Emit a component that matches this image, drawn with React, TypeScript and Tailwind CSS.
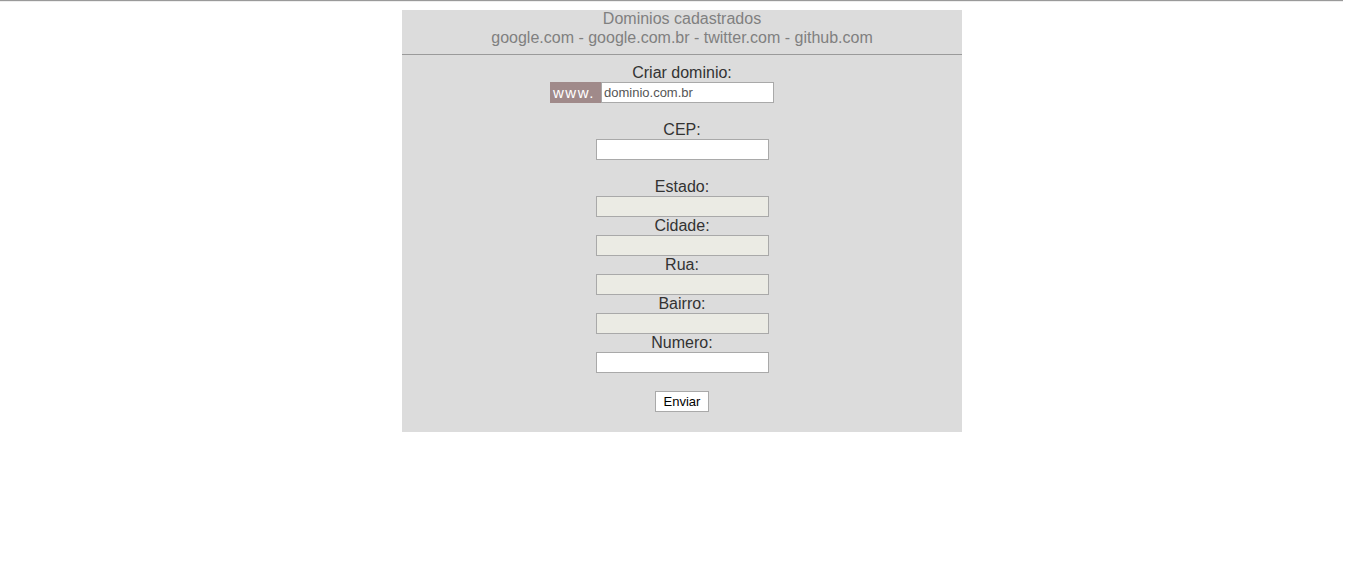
export default function App() {
  const fields = [
    { label: "Estado:", disabled: true },
    { label: "Cidade:", disabled: true },
    { label: "Rua:", disabled: true },
    { label: "Bairro:", disabled: true },
    { label: "Numero:", disabled: false },
  ];

  return (
    <div className="min-h-[561px] bg-white font-['Liberation_Sans',Arial,sans-serif] text-base">
      <div className="w-[1343px] border-t border-[#9a9a9a] border-b border-b-[#eeeeee]" />
      <div className="mx-auto mt-2 w-[560px] bg-[#dcdcdc] pb-5 translate-x-[2px]">
        <div className="flex flex-col items-center pb-[7px] leading-[19px] text-[#808080]">
          <span className="-mt-[1px]">Dominios cadastrados</span>
          <span>google.com - google.com.br - twitter.com - github.com</span>
        </div>
        <div className="border-t border-[#9a9a9a]" />
        <div className="flex flex-col items-center pt-[9px] text-[#333] leading-[18px]">
          <span>Criar dominio:</span>
          <div className="flex items-stretch h-[21px] mr-[40px]">
            <span className="w-[51px] bg-[#a08a8a] px-[3px] text-[15px] leading-[21px] tracking-[1.5px] text-white">
              www.
            </span>
            <input
              className="w-[173px] h-[21px] border border-[#a9a9a9] bg-white px-[2px] text-[13px] text-[#555] outline-none"
              defaultValue="dominio.com.br"
            />
          </div>

          <span className="mt-[18px]">CEP:</span>
          <input className="w-[173px] h-[21px] border border-[#a9a9a9] bg-white outline-none" />

          <div className="mt-[18px] flex flex-col items-center">
            {fields.map((f) => (
              <div key={f.label} className="flex flex-col items-center">
                <span>{f.label}</span>
                <input
                  disabled={f.disabled}
                  className={
                    f.disabled
                      ? "w-[173px] h-[21px] border border-[#a9a9a9] bg-[#ebebe4] outline-none"
                      : "w-[173px] h-[21px] border border-[#a9a9a9] bg-white outline-none"
                  }
                />
              </div>
            ))}
          </div>

          <button className="mt-[18px] h-[21px] w-[54px] border border-[#a9a9a9] bg-white text-[13px] leading-[19px] text-black">
            Enviar
          </button>
        </div>
      </div>
    </div>
  );
}
